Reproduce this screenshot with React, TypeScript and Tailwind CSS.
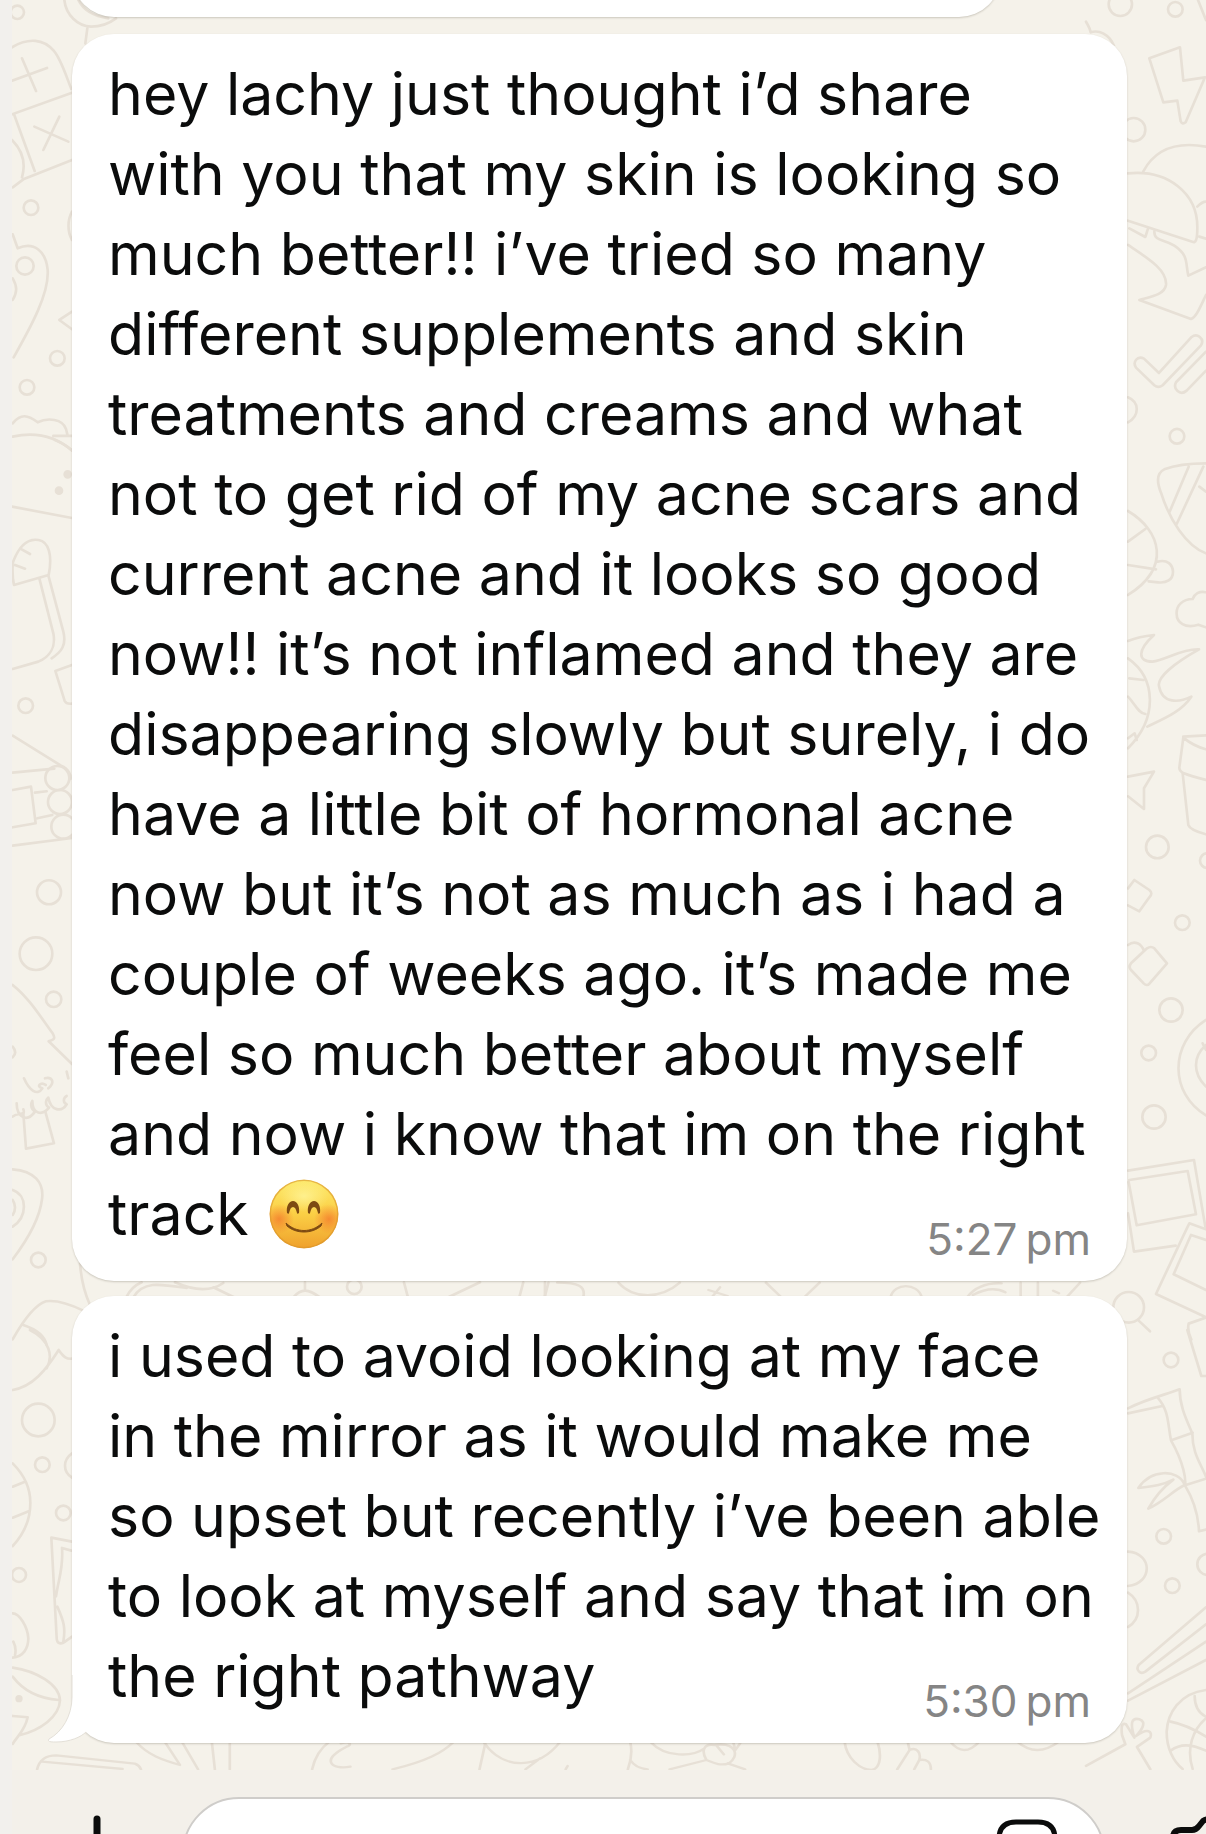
import type { ReactNode } from "react";

const FIRST = [
  "hey lachy just thought i’d share",
  "with you that my skin is looking so",
  "much better!! i’ve tried so many",
  "different supplements and skin",
  "treatments and creams and what",
  "not to get rid of my acne scars and",
  "current acne and it looks so good",
  "now!! it’s not inflamed and they are",
  "disappearing slowly but surely, i do",
  "have a little bit of hormonal acne",
  "now but it’s not as much as i had a",
  "couple of weeks ago. it’s made me",
  "feel so much better about myself",
  "and now i know that im on the right",
];

const SECOND = [
  "i used to avoid looking at my face",
  "in the mirror as it would make me",
  "so upset but recently i’ve been able",
  "to look at myself and say that im on",
  "the right pathway",
];

function Smile() {
  return (
    <svg viewBox="0 0 70 70" className="ml-1 inline-block size-[70px] align-middle" role="img" aria-label="Smiling face">
      <defs>
        <linearGradient id="face" x1="0" y1="0" x2="0" y2="1">
          <stop offset="0" stopColor="#fdea6c" />
          <stop offset="0.5" stopColor="#fbcf45" />
          <stop offset="1" stopColor="#efa02c" />
        </linearGradient>
        <radialGradient id="glow">
          <stop offset="0" stopColor="#fff59a" stopOpacity="0.8" />
          <stop offset="1" stopColor="#fff59a" stopOpacity="0" />
        </radialGradient>
        <radialGradient id="cheek">
          <stop offset="0" stopColor="#f4762c" stopOpacity="0.75" />
          <stop offset="1" stopColor="#f4762c" stopOpacity="0" />
        </radialGradient>
        <clipPath id="disc"><circle cx="35" cy="35" r="34.5" /></clipPath>
      </defs>
      <g clipPath="url(#disc)">
        <circle cx="35" cy="35" r="34.5" fill="url(#face)" />
        <ellipse cx="35" cy="17" rx="25" ry="16" fill="url(#glow)" />
        <circle cx="10" cy="40" r="15" fill="url(#cheek)" />
        <circle cx="60" cy="40" r="15" fill="url(#cheek)" />
        <circle cx="35" cy="35" r="34" fill="none" stroke="#d9942c" strokeOpacity="0.6" strokeWidth="2" />
      </g>
      <path d="M18 34c-1-7 2-12 6-12s7 5 6 12c-1 1-2 1-2 0-1-4-2-6-4-6s-3 2-4 6c0 1-1 1-2 0zM39 34c-1-7 2-12 6-12s7 5 6 12c-1 1-2 1-2 0-1-4-2-6-4-6s-3 2-4 6c0 1-1 1-2 0z" fill="#7d4a12" />
      <path d="M17 44c10 10 26 10 36 0l-1 3c-9 8-25 8-34 0z" fill="#7d4a12" stroke="#7d4a12" strokeWidth="1" strokeLinejoin="round" />
    </svg>
  );
}

function Wallpaper() {
  return (
    <svg
      viewBox="12 0 1194 1770"
      preserveAspectRatio="xMidYMin slice"
      className="absolute inset-0 size-full"
      fill="none"
      stroke="#e7e0d6"
      strokeWidth="8"
      strokeLinecap="round"
      strokeLinejoin="round"
      aria-hidden="true"
    >
      <g transform="scale(.3333)">
        <circle cx="52" cy="37" r="20" />
        <path d="M193 0c5 45 40 78 80 80 30 0 55-10 75-25M235 0c15 30 40 48 90 55M262 85l-6 45" />
        <path d="M36 142c50-30 95-25 125 10 22 25 35 70 53 115" />
        <path d="M66 175l42 98M36 242l105-38M36 343l180-65M42 343l62 170M216 480L70 538 38 562M36 420c30 30 42 70 30 112" />
        <path d="M103 380l102 45M178 350l-48 100" />
        <circle cx="93" cy="623" r="22" />
        <path d="M216 635c-14 25-14 60 0 85M38 703l15 42c50-22 85 10 90 65 5 70-50 170-102 262M38 835c14 25 14 40 0 65" />
        <circle cx="75" cy="798" r="26" />
        <path d="M216 935l-38 25 38 28" />
        <circle cx="172" cy="1075" r="22" />
        <circle cx="81" cy="1162" r="22" />
        <path d="M38 1270c25-30 45-25 75-3 30-15 75-10 85 20l5 20M38 1310c70-15 130 0 178 42M160 1308h55" />
      </g>
      <g transform="translate(0 440) scale(.3333)">
        <circle cx="203" cy="103" r="9" fill="#e7e0d6" />
        <circle cx="177" cy="152" r="9" fill="#e7e0d6" />
        <path d="M165 0q35 15 51 32M36 200l180 34M36 375c20-60 50-80 80-75 30 5 42 45 30 105L42 435c-5-20-5-40-4-60M65 328l25 14M45 375l30 11M118 415l42 165c8 40-10 70-45 85l-77 22M146 410l44 165c10 40-5 60-35 80" />
        <path d="M216 675l-50 18 28 90q5 10 22 8M38 887l145 90c25 10 30 30 28 40M38 998l125-12M38 1050l55-10 14 110-69 12M105 1058l35-4M112 1135l45-10M38 1217l178-23" />
        <circle cx="77" cy="797" r="22" />
        <circle cx="172" cy="1014" r="36" />
        <circle cx="180" cy="1086" r="36" />
        <circle cx="190" cy="1160" r="36" />
        <circle cx="147" cy="1357" r="36" />
      </g>
      <g transform="translate(0 880) scale(.3333)">
        <circle cx="108" cy="221" r="49" />
        <circle cx="161" cy="358" r="23" />
        <path d="M38 315c45 35 80 90 120 145 12 20-2 20-12 24l70 68M38 500q15 18 0 32M72 595c15 35 40 55 55 30-20-5-5-20 10-10M135 595c20-5 32 10 10 30M200 575l5 20M38 710c15-15 40 0 32-22M50 670c0 40 30 60 55 25-15-10-12-25-8-32 0 40 30 45 50 20-15-10-8-25-2-30 8 40 40 45 55 20-12-5-10-20 0-25" />
        <path d="M70 700l8 106 84-16-26-95" />
        <path d="M38 868c65 5 95 40 88 90-8 65-50 130-88 180M38 930c45 15 45 80 0 110M38 960q14 22 0 45" />
        <circle cx="115" cy="1140" r="22" />
        <path d="M240 1150q5 70 30 125M38 1378c40-70 70-105 100-114 35-5 75 10 112 28M70 1335c45 15 65 35 70 60" />
      </g>
      <g transform="translate(0 1330) scale(.3333)">
        <path d="M90 0c60 30 70 80 50 115M38 180c60-10 100-60 138-120 15 22 25 28 40 26" />
        <circle cx="115" cy="270" r="49" />
        <circle cx="127" cy="404" r="22" />
        <circle cx="190" cy="549" r="22" />
        <circle cx="57" cy="735" r="21" />
        <path d="M216 370c-28 20-28 55 0 73M38 400c35 35 53 75 53 118 0 50-20 95-53 130M38 470l35-14M38 563l50-20" />
        <path d="M216 635l-62-12 16 300c0 20 15 20 25 12l21-15M214 662l-28-8c5 60-10 90-18 145M172 830c20 45 25 65 18 105M38 850c20 0 45 40 47 75 0 30-15 55-47 58M40 935q10 20 5 40" />
        <path d="M38 1013c70 10 140 50 142 98-2 50-60 90-122 105M38 1040c30 40 70 65 138 70M38 1158l45 4c-8 40-30 55-45 80" />
        <circle cx="57" cy="1106" r="7" fill="#e7e0d6" />
      </g>
      <g transform="translate(1086 0) scale(.3333)">
        <circle cx="103" cy="13" r="35" />
        <circle cx="268" cy="28" r="22" />
        <path d="M336 0l24 60M0 65c5 10 12 18 14 32 25-8 55 5 70 40" />
        <path d="M190 175l92-33 10 100 65-10-58 135q-10 8-15-3l-10-62-42 5z" />
        <circle cx="143" cy="389" r="35" />
        <path d="M172 514c35-65 100-90 188-74M126 520c120-12 210 60 208 165 0 35-5 45-15 40L126 662M130 685l48 26 8-25M334 620q15-15 26-15M340 710l20 6M205 695c0 30 30 22 60 42 45 30 33 55 42 90l53-25M126 735c60 40 118 75 114 120-5 30-45 35-80 45l155 57c15-5 25-30 45-72" />
        <path d="M150 1103l55 53q12 10 25 0l115-120c12-20-12-38-28-25l-98 108-45-43c-20-10-35 10-24 27zM360 1055l-90 92c-10 20 12 42 32 25l58-60" />
        <path d="M126 1192c35 15 35 55 0 75" />
        <circle cx="273" cy="1309" r="22" />
      </g>
      <g transform="translate(1086 440) scale(.3333)">
        <path d="M360 70c-60 0-100 8-125 18-25 12-22 40-10 70 25 80 75 160 135 182M308 80l-57 135M352 80l-80 172M340 140l20 15" />
        <path d="M126 213c100 60 130 170 0 252M126 305l52-38M126 375l84 13M215 365c30-8 45 10 46 30 0 25-20 35-45 32l-28-3" />
        <path d="M360 457c-20-5-35 5-40 20-30 0-50 20-48 45 0 25 25 45 65 32l23 8M126 603c20-8 50-15 78-18-50 45-50 80-5 80 40-5 90-40 140-37-80 45-125 85-120 110 10 55 60 50 97 32-30 45-80 65-132 90M126 655c85 60 90 180 0 270M130 715l42 5M126 770c20 20 30 50 52 52M126 895l20-15 6 20" />
        <path d="M126 1010l78-15-30 50v62l-48-38M292 890l68-4M292 893q30 25 68 35M292 893l-12 90c0 15 15 20 80 37M290 1000l17 155q5 15 53 28" />
        <circle cx="214" cy="1221" r="34" />
        <circle cx="364" cy="1262" r="22" />
      </g>
      <g transform="translate(1086 880) scale(.3333)">
        <path d="M126 25L145 0l45 30q12 10 0 22l-30 42-34-18M126 195c20-15 40-5 48 18M135 250l48-45q12-8 22 0l38 45-52 60q-8 10-18 0l-38-40q-8-10 0-20z" />
        <circle cx="289" cy="128" r="22" />
        <circle cx="255" cy="390" r="35" />
        <circle cx="188" cy="519" r="22" />
        <circle cx="204" cy="711" r="35" />
        <path d="M360 420c-110 70-110 220 0 286M360 495c-40 35-40 85 0 125M350 490l10 20" />
        <path d="M126 872l198-32 34 200M130 900l175-27 25 130-178 33-24-130M126 1000l18 115 125-18M360 1048l-50-18q-15 30-100 212l150 70M360 1080l-45-15-52 118 97 47M360 1313l-52 18q-5 20 8 48" />
        <circle cx="128" cy="1282" r="46" />
        <path d="M158 1322l34 32" />
      </g>
      <g transform="translate(1086 1330) scale(.3333)">
        <circle cx="255" cy="90" r="22" />
        <path d="M304 0l42 138h14M126 235c60-30 110-40 155-57 0 50 20 90 38 132 0 60 25 90 41 130M126 250l103-22M215 203c35 40 30 80 40 128 40 70 45 120 42 135 30 50 40 90 42 138l21-5M258 330l62-22M297 466l63-20M295 462c-20-45-100-45-138 12 50-5 75-10 105-25-40 30-60 60-75 87 45-20 75-55 108-70" />
        <circle cx="233" cy="619" r="22" />
        <circle cx="366" cy="703" r="32" />
        <circle cx="259" cy="767" r="22" />
        <path d="M126 665c75 5 75 95 0 103M126 788c40 25 40 80 0 103M360 832L158 1005c-10 15 5 30 20 20l182-142M360 935l-234 155M360 990l-234 122" />
        <path d="M360 1080c-80 10-115 70-118 125 0 50 20 90 48 112M326 1098q0 45 34 62M254 1175q50 10 106 45M360 1165c-40 35-60 90-40 152M254 1262c30-22 60-20 106 0" />
        <path d="M0 1308l118-65-10-28q-5-40 12-32l25 40c-15-50-5-60 15-55 25 8 5 35-10 50 35-25 50-15 43 5l-40 28 40 67" />
      </g>
      {/* gap between the two messages */}
      <g transform="translate(50 1160) scale(.3333)">
        <path d="M230 410q15-30 45-43M250 412c30-50 80-40 160-28M375 367q90 40 145 2M490 382l62 30M730 412c25-28 45-25 80 0M765 367v20M1062 367l12 45M1195 412l95-45M1420 367l-12 45M1485 367v45" />
        <circle cx="913" cy="380" r="22" />
      </g>
      <g transform="translate(540 1180) scale(.383 .3333)" strokeWidth="7">
        <path d="M22 308l-10 44M45 308c55 0 75 10 68 44M205 308c40 50 110 50 160 0M440 330l50 18M470 322l-20 28M590 308l40 44M730 308l-40 44M915 352c10-45 70-45 82 0M1115 352q30-45 90-42M1130 345q50-30 85-8M1255 308v44M1300 308v44M1410 308l-35 44M1340 332l15 8" />
      </g>
      {/* strip under the last message */}
      <g transform="translate(0 1700) scale(.383 .3333)" strokeWidth="7">
        <path d="M97 208c5-25 20-42 50-42l205 25q12 5 16 17M110 185l210 22M355 125c30 40 70 55 115 70l-40-70M475 125l42 83M553 125l8 83M600 125v83M860 125q-35 30-45 83M890 130c25-8 30 5 15 10-70 40-40 70 10 60M1025 208c90-25 130-50 160-83M1268 125l-16 83M1265 130c50 80 140 80 198-5M1410 175l-38 33M1482 198l-5 10" />
      </g>
      <g transform="translate(600 1700) scale(.387 .3333)" strokeWidth="7">
        <path d="M78 125q8 40-6 83M78 180q15 25 45 28M130 125c40 50 110 45 140 20M180 208l95-28c-15-30-5-50 20-45 60-10 65 35 38 55-25 10-45-5-58-10M300 135l20 28M330 190l45 18M345 130l5 20 12-20M632 125c5 50 40 85 70 85 25-5 25-50 15-85M795 125l5 25-32 58M800 150c20-10 30 10 25 30l-13 28M825 180q30-5 30 28M905 125q35 50 75 0M1078 125q50 50 108 0" />
      </g>
    </svg>
  );
}

type BubbleProps = { lines: string[]; time: string; tail?: boolean; last?: ReactNode };

function Bubble({ lines, time, tail, last }: BubbleProps) {
  return (
    <article className="relative flex flex-col rounded-[42px] bg-white px-9 pt-5 pb-[27px] shadow-[0_1px_2px_rgba(60,50,30,0.22)]">
      {tail && (
        <svg viewBox="0 0 60 80" className="absolute bottom-0 -left-6 h-20 w-[60px]" aria-hidden="true">
          <path d="M24 12V34C24 53 14 69 1 76C-1 79 3 79 8 79C22 79 33 74 38 69L60 40V12Z" fill="#fff" />
          <path d="M24 12V34C24 53 14 69 1 76C-1 79 3 79 8 79C22 79 33 74 38 69" fill="none" stroke="#e4e0d8" strokeWidth="1" />
        </svg>
      )}
      <p className="relative text-[59px] leading-[80px] whitespace-nowrap text-[#0b0c0c]">
        {lines.map((line) => (
          <span key={line} className="block">{line}</span>
        ))}
        {last}
      </p>
      <time className="absolute right-9 bottom-4 text-[44px] leading-[52px] text-[#858585]">{time}</time>
    </article>
  );
}

export default function App() {
  return (
    <div className="flex h-screen flex-col overflow-hidden border-l-12 border-[#f2f0ed] bg-[#f3f0ea] font-[Inter,sans-serif]">
      <main className="relative shrink-0 overflow-hidden bg-[#f5f2ea] pr-[79px] pb-[27px] pl-[60px]">
        <Wallpaper />
        <div className="relative flex flex-col">
          <div className="-mt-20 mr-[126px] mb-[17px] h-[97px] rounded-[42px] bg-white shadow-[0_1px_2px_rgba(60,50,30,0.22)]" />
          <div className="flex flex-col gap-[15px]">
            <Bubble
              lines={FIRST}
              time={"5:27\u2009pm"}
              last={<span className="flex items-center gap-4">track <Smile /></span>}
            />
            <Bubble lines={SECOND} time={"5:30\u2009pm"} tail />
          </div>
        </div>
      </main>

      <footer className="flex shrink-0 items-start gap-[50px] pt-[27px] pl-[50px]">
        <button type="button" aria-label="Attach" className="mt-[17px]">
          <svg viewBox="0 0 70 70" className="size-[70px]" stroke="#0b0c0c" strokeWidth="7" strokeLinecap="round">
            <path d="M35 5V65M5 35H65" />
          </svg>
        </button>
        <div className="relative flex-1">
          <input
            type="text"
            aria-label="Message"
            className="h-[114px] w-full rounded-full border-2 border-[#cfcdca] bg-white px-12 text-[59px] outline-none"
          />
          <button type="button" aria-label="Stickers" className="absolute top-[22px] right-[47px]">
            <svg viewBox="0 0 62 62" className="size-[62px]" fill="none" stroke="#0b0c0c" strokeWidth="5">
              <path d="M20 3H42Q59 3 59 20V36L36 59H20Q3 59 3 42V20Q3 3 20 3Z" />
            </svg>
          </button>
        </div>
        <button type="button" aria-label="Camera" className="mt-[19px] -mr-[16px] ml-[15px]">
          <svg viewBox="0 0 52 70" className="h-[70px] w-[52px]" fill="none" stroke="#0b0c0c" strokeWidth="6" strokeLinejoin="round">
            <path d="M3 60V22Q3 14 11 14H22Q26 14 29 10L33 5Q36 3 40 3H52" />
          </svg>
        </button>
      </footer>
    </div>
  );
}
